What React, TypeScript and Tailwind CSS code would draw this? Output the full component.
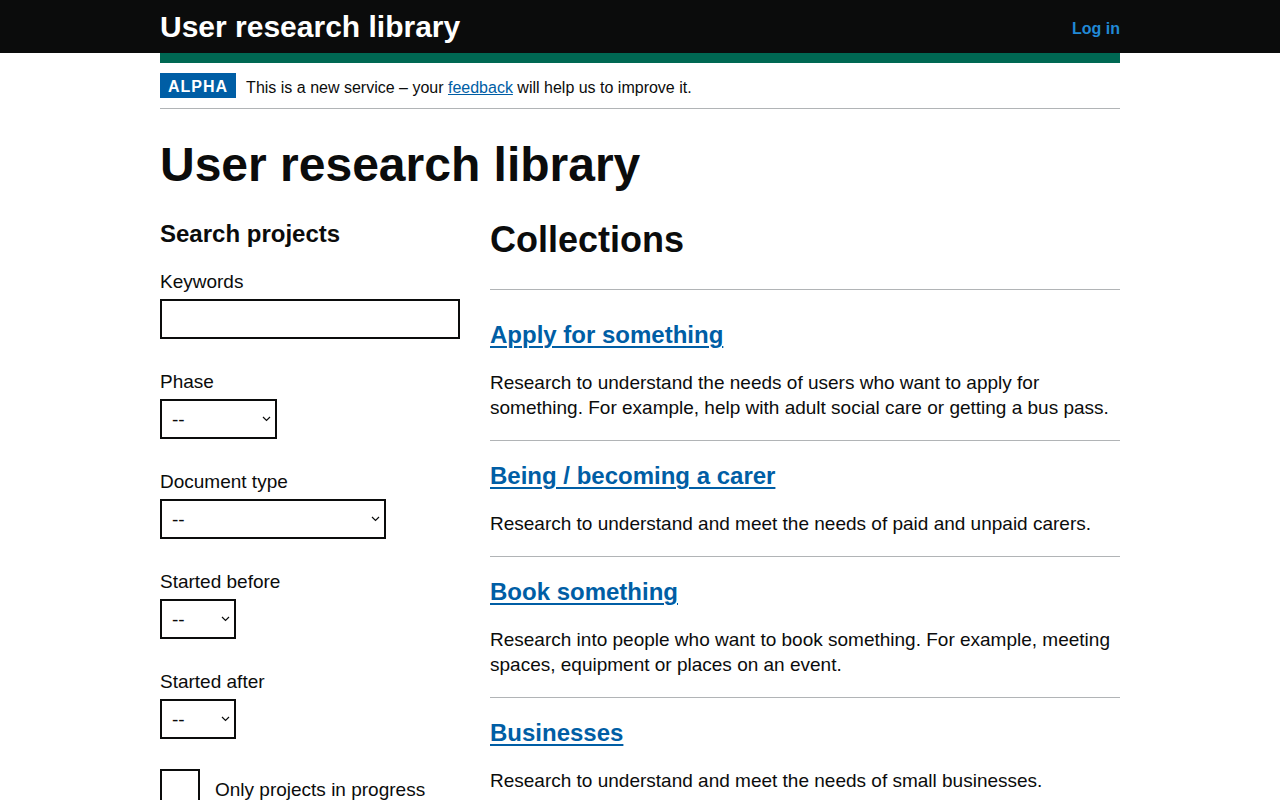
import React from "react";

const collections = [
  {
    title: "Apply for something",
    text: "Research to understand the needs of users who want to apply for something. For example, help with adult social care or getting a bus pass.",
  },
  {
    title: "Being / becoming a carer",
    text: "Research to understand and meet the needs of paid and unpaid carers.",
  },
  {
    title: "Book something",
    text: "Research into people who want to book something. For example, meeting spaces, equipment or places on an event.",
  },
  {
    title: "Businesses",
    text: "Research to understand and meet the needs of small businesses.",
  },
];

function Select({ width }: { width: string }) {
  return (
    <div className={`relative h-[40px] ${width}`}>
      <select className="h-full w-full appearance-none rounded-none border-2 border-[#0b0c0c] bg-white pl-[10px] pt-[3px] text-[19px] text-[#0b0c0c] outline-none">
        <option>--</option>
      </select>
      <svg
        className="pointer-events-none absolute right-[6px] top-[17px]"
        width="9"
        height="6"
        viewBox="0 0 9 6"
        fill="none"
        stroke="#0b0c0c"
        strokeWidth="1.2"
      >
        <path d="M1 1l3.5 3.5L8 1" />
      </svg>
    </div>
  );
}

function Field({ label, children }: { label: string; children: React.ReactNode }) {
  return (
    <div className="mb-[30px]">
      <label className="mb-[5px] block text-[19px] leading-[25px]">{label}</label>
      {children}
    </div>
  );
}

export default function App() {
  return (
    <div className="min-h-screen bg-white font-['Liberation_Sans',Arial,sans-serif] text-[#0b0c0c]">
      {/* Header */}
      <header className="bg-[#0b0c0c]">
        <div className="mx-auto flex h-[53px] w-[960px] items-center justify-between">
          <span className="text-[30px] font-bold leading-none text-white">User research library</span>
          <a href="#" className="pt-[4px] text-[16px] font-bold text-[#2189d6]">
            Log in
          </a>
        </div>
      </header>

      <div className="mx-auto w-[960px]">
        <div className="h-[10px] bg-[#006853]" />

        {/* Phase banner */}
        <div className="flex items-center border-b border-[#b1b4b6] py-[10px]">
          <span className="inline-block h-[25px] bg-[#005ea5] px-[8px] pt-[1px] text-[16px] font-bold uppercase leading-[25px] tracking-[1px] text-white">
            Alpha
          </span>
          <span className="ml-[10px] pt-[5px] text-[16px] leading-[20px]">
            This is a new service – your{" "}
            <a href="#" className="text-[#005ea5] underline">
              feedback
            </a>{" "}
            will help us to improve it.
          </span>
        </div>

        <main className="pt-[31px]">
          <h1 className="mb-[28px] text-[48px] font-bold leading-[50px]">User research library</h1>

          <div className="flex">
            {/* Filters */}
            <div className="w-[300px] shrink-0 pt-[1px]">
              <h2 className="mb-[20px] text-[24px] font-bold leading-[30px]">Search projects</h2>
              <Field label="Keywords">
                <input className="block h-[40px] w-full border-2 border-[#0b0c0c] px-[5px] text-[19px] outline-none" />
              </Field>
              <Field label="Phase">
                <Select width="w-[117px]" />
              </Field>
              <Field label="Document type">
                <Select width="w-[226px]" />
              </Field>
              <Field label="Started before">
                <Select width="w-[76px]" />
              </Field>
              <Field label="Started after">
                <Select width="w-[76px]" />
              </Field>
              <label className="flex items-center">
                <span className="h-[40px] w-[40px] shrink-0 border-2 border-[#0b0c0c] bg-white" />
                <span className="ml-[15px] text-[19px] leading-[25px]">Only projects in progress</span>
              </label>
            </div>

            {/* Collections */}
            <div className="ml-[30px] w-[630px] pt-[2px]">
              <h2 className="mb-[29px] text-[36px] font-bold leading-[40px]">Collections</h2>
              <ul>
                {collections.map((c, i) => (
                  <li
                    key={c.title}
                    className={`border-t border-[#b1b4b6] pb-[20px] ${i === 0 ? "pt-[30px]" : "pt-[20px]"}`}
                  >
                    <h3 className="mb-[20px] text-[24px] font-bold leading-[30px]">
                      <a href="#" className="text-[#005ea5] underline decoration-2 underline-offset-[3px]">
                        {c.title}
                      </a>
                    </h3>
                    <p className="text-[19px] leading-[25px]">{c.text}</p>
                  </li>
                ))}
              </ul>
            </div>
          </div>
        </main>
      </div>
    </div>
  );
}
